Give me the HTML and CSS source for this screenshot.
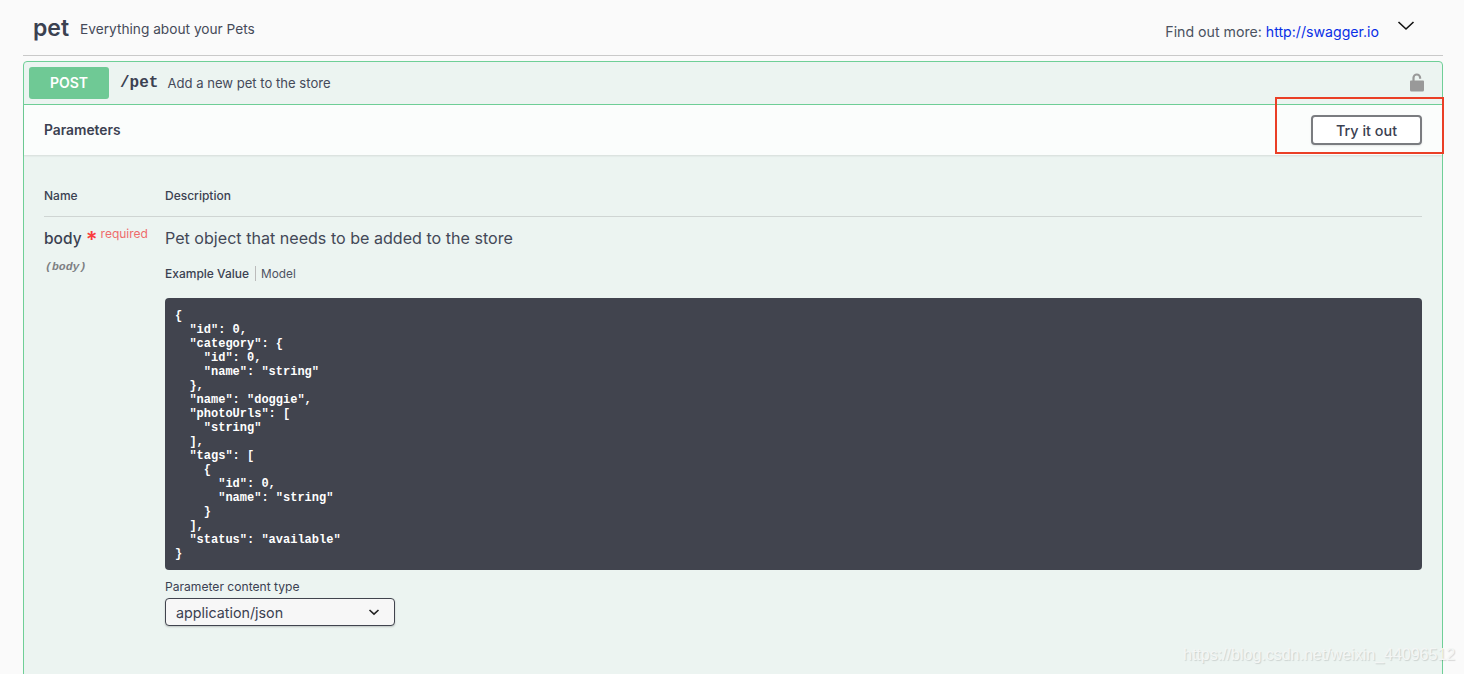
FILE: index.html
```html
<!DOCTYPE html>
<html lang="en">
<head>
<meta charset="utf-8">
<title>pet</title>
<link rel="stylesheet" href="styles.css">
</head>
<body>
<div class="wrapper">
  <header class="tag">
    <h3 class="tag-name">pet</h3>
    <span class="tag-desc">Everything about your Pets</span>
    <span class="tag-more">Find out more: <a href="#">http://swagger.io</a></span>
    <svg class="tag-arrow" width="20" height="20" viewBox="0 0 20 20"><path d="M2.5 5 L10 12 L17.5 5" fill="none" stroke="#111" stroke-width="1.6"/></svg>
  </header>
  <section class="opblock">
    <div class="summary">
      <span class="method">POST</span>
      <span class="path">/pet</span>
      <span class="summary-desc">Add a new pet to the store</span>
      <svg class="lock" width="16" height="20" viewBox="0 0 16 20"><path d="M1 8.500 A1 1 0 0 1 2 7.500 H14 A1 1 0 0 1 15 8.500 V17 A1.500 1.500 0 0 1 13.500 18.500 H2.500 A1.500 1.500 0 0 1 1 17 Z" fill="#999"/><path d="M4.500 8 V4.800 A3.300 3.300 0 0 1 11.100 4.800 V5.800" fill="none" stroke="#999" stroke-width="2.200"/></svg>
    </div>
    <div class="section-header">
      <h4 class="section-title">Parameters</h4>
      <button class="try">Try it out</button>
    </div>
    <div class="params">
      <div class="col-heads">
        <span class="col-name">Name</span>
        <span class="col-desc">Description</span>
      </div>
      <div class="param-row">
        <div class="col-name">
          <div class="param-name">body <span class="star">*</span><sup class="req">required</sup></div>
          <div class="param-in">(body)</div>
        </div>
        <div class="col-main">
          <p class="param-text">Pet object that needs to be added to the store</p>
          <div class="tabs"><span class="tab active">Example Value</span><span class="tab">Model</span></div>
<pre class="code">{
  "id": 0,
  "category": {
    "id": 0,
    "name": "string"
  },
  "name": "doggie",
  "photoUrls": [
    "string"
  ],
  "tags": [
    {
      "id": 0,
      "name": "string"
    }
  ],
  "status": "available"
}</pre>
          <div class="ctype-label">Parameter content type</div>
          <div class="select">
            <span>application/json</span>
            <svg width="12" height="12" viewBox="0 0 12 12"><path d="M1.500 4 L6 8.200 L10.500 4" fill="none" stroke="#222" stroke-width="1.600"/></svg>
          </div>
        </div>
      </div>
    </div>
  </section>
</div>
<div class="highlight"></div>
<div class="watermark">https://blog.csdn.net/weixin_44096512</div>
</body>
</html>
```
FILE: styles.css
```css
* { box-sizing: border-box; }
html, body { margin: 0; height: 674px; overflow: hidden; }
body {
  background: #fafafa;
  font-family: "Inter", "Noto Sans", sans-serif;
  color: #3b4151;
  position: relative;
}
.wrapper { margin: 0 21px 0 23px; }
.tag {
  height: 56px;
  border-bottom: 1px solid #c9c9c9;
  display: flex;
  align-items: center;
  padding: 3px 27px 0 10px;
}
.tag-name { margin: 0; font-size: 23px; font-weight: 600; line-height: 1; position: relative; top: -1px; color: #3b4151; }
.tag-desc { margin-left: 11px; font-size: 13.700px; color: #454a59; }
.tag-more { margin-left: auto; font-size: 14.150px; color: #4b5261; position: relative; top: 2px; }
.tag-more a { color: #0a2fe6; text-decoration: none; }
.tag-arrow { margin-left: 17px; position: relative; top: -2px; }
.opblock {
  margin-top: 5px;
  height: 640px;
  border: 1px solid #6fcf97;
  border-radius: 4px;
  background: #ecf4f1;
}
.summary {
  height: 43px;
  border-bottom: 1px solid #6fcf97;
  display: flex;
  align-items: center;
  padding: 0 17px 1px 5px;
}
.method {
  width: 80px;
  height: 32px;
  border-radius: 3px;
  background: #6fc995;
  color: #fff;
  font-size: 14px;
  font-weight: 600;
  display: flex;
  align-items: center;
  justify-content: center;
}
.path { margin-left: 11px; font: bold 16px "Liberation Mono", monospace; }
.summary-desc { margin-left: 9px; font-size: 13.100px; color: #454a59; }
.lock { margin-left: auto; }
.section-header {
  height: 50px;
  background: rgba(255, 255, 255, .8);
  box-shadow: 0 1px 2px rgba(0, 0, 0, .1);
  display: flex;
  align-items: center;
  justify-content: space-between;
  padding: 0 20px;
}
.section-title { margin: 0; font-size: 13.800px; font-weight: 600; }
.try {
  width: 111px;
  height: 30px;
  background: #fff;
  border: 2px solid #7a7c80;
  border-radius: 4px;
  box-shadow: 0 1px 2px rgba(0, 0, 0, .1);
  color: #3b4151;
  font: 500 14.400px "Inter", "Noto Sans", sans-serif;
}
.params { padding: 0 20px; }
.col-heads {
  height: 62px;
  border-bottom: 1px solid #cfd5d3;
  display: flex;
  align-items: flex-start;
  padding-top: 33px;
  font-size: 12px;
  font-weight: 500;
}
.col-name { width: 121px; flex: none; }
.param-row { display: flex; padding-top: 11px; }
.param-name { margin-top: 1px; font-size: 15.500px; font-weight: 500; line-height: 20px; height: 20px; white-space: nowrap; }
.star { color: #f93e3e; font-size: 22px; font-weight: 600; line-height: 0; position: relative; top: 3px; }
.req { color: #ef6b6b; font-size: 12px; line-height: 0; font-weight: 400; position: relative; top: -6px; vertical-align: baseline; margin-left: 3px; }
.param-in { margin-top: 11px; margin-left: 1px; font: italic bold 11.500px "Liberation Mono", monospace; color: #7d7f83; }
.col-main { flex: 1; min-width: 0; }
.param-text { margin: 0; font-size: 16.100px; line-height: 20px; color: #434857; }
.tabs { display: flex; margin-top: 17px; height: 17px; align-items: center; font-size: 12px; }
.tab { padding: 0 6px 0 5px; color: #4c5262; font-size: 11.800px; }
.tab:first-child { padding: 0 6px 0 0; border-right: 1px solid #bbb; font-size: 12px; font-weight: 500; color: #3b4151; }
.code {
  margin: 16px 0 0;
  height: 272px;
  padding: 11px 10px 10px;
  border-radius: 4px;
  background: #41444e;
  color: #fff;
  font: bold 12px/14px "Liberation Mono", monospace;
}
.ctype-label { margin-top: 9px; font-size: 12.100px; line-height: 15px; }
.select {
  margin-top: 4px;
  width: 230px;
  height: 28px;
  border: 1px solid #41444e;
  border-radius: 4px;
  background: #f7f7f7;
  box-shadow: 0 1px 2px rgba(0, 0, 0, .2);
  display: flex;
  align-items: center;
  justify-content: space-between;
  padding: 0 14px 0 10px;
  font-size: 14.300px;
  font-weight: 400;
}
.highlight {
  position: absolute;
  left: 1275px;
  top: 97px;
  width: 169px;
  height: 57px;
  border: 2px solid #ea3f26;
}
.watermark {
  position: absolute;
  left: 1183px;
  top: 646px;
  font: 16px "Liberation Sans", sans-serif;
  color: #f4f6f5;
  text-shadow: 1px 1px 1px rgba(0, 0, 0, .14);
  white-space: nowrap;
}
```
